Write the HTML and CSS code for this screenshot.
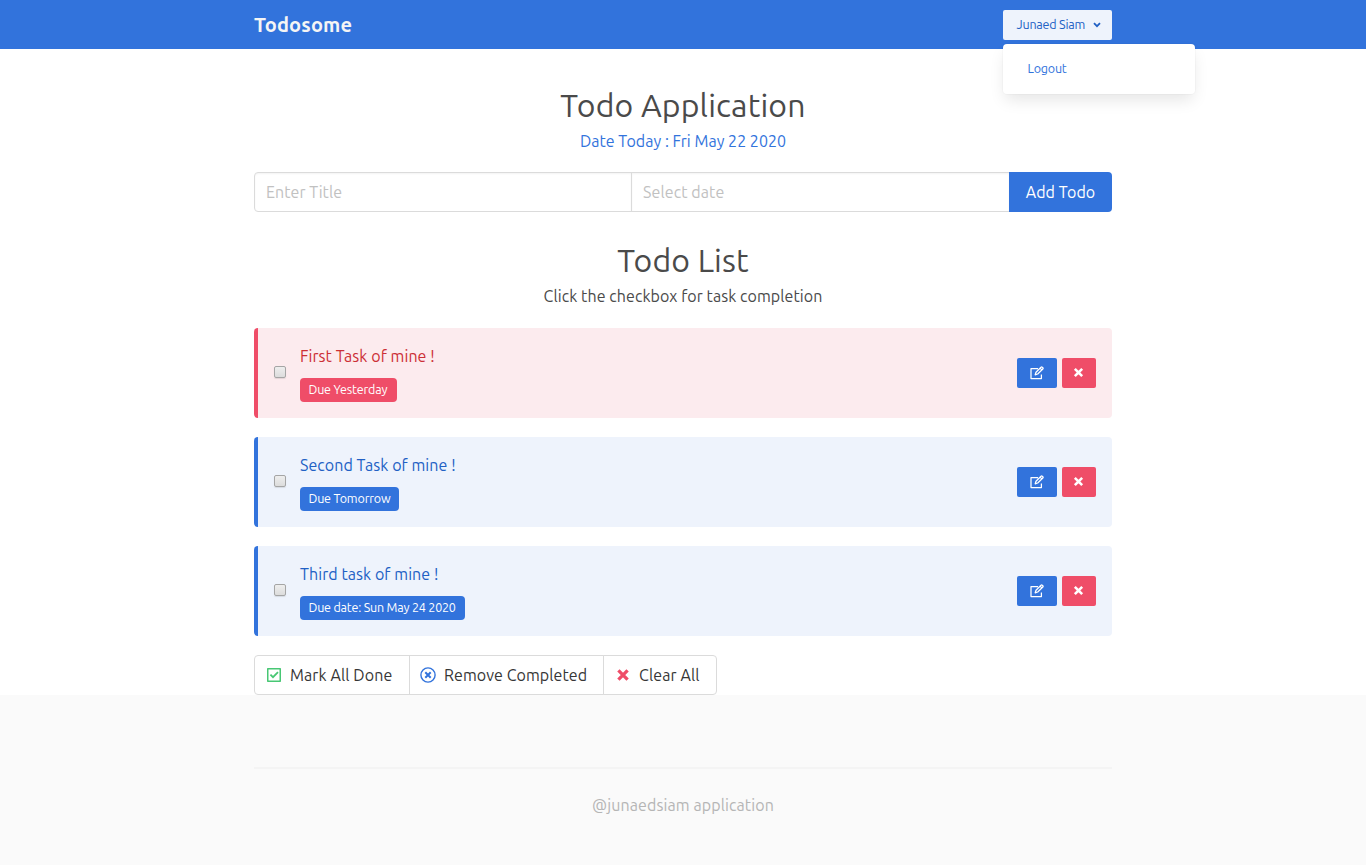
FILE: index.html
```html
<!DOCTYPE html>
<html lang="en">
<head>
<meta charset="utf-8">
<title>Todosome</title>
<link rel="stylesheet" href="styles.css">
</head>
<body>
<svg class="sprite" aria-hidden="true">
  <symbol id="edit" viewBox="0 0 14 14"><path d="M8 2.6H1v10h10.4V8.4M6 6.2 11 1.2Q11.6.6 12.2 1.2L12.8 1.8Q13.4 2.4 12.8 3L7.7 8 5.2 8.8Z M10.1 2.1 11.9 3.9" fill="none" stroke="currentColor" stroke-width="1.25" stroke-linejoin="round"/></symbol>
  <symbol id="cross" viewBox="0 0 12 12"><path d="M2 2 10 10M10 2 2 10" fill="none" stroke="currentColor" stroke-width="2.8"/></symbol>
</svg>
<nav class="navbar">
  <div class="container navbar-inner">
    <a class="brand"><span class="t-brand">Todosome</span></a>
    <div class="dropdown">
      <button class="user"><span class="t-user">Junaed Siam</span><svg class="chevron" viewBox="0 0 8 6"><path d="M1 1.2 4 4.2 7 1.2" fill="none" stroke="currentColor" stroke-width="1.8"/></svg></button>
      <div class="menu"><a class="t-logout">Logout</a></div>
    </div>
  </div>
</nav>
<main class="container">
  <header class="heading"><h1><span class="t-app">Todo Application</span></h1><p class="date"><span class="t-date">Date Today : Fri May 22 2020</span></p></header>
  <form class="form"><input class="input t-enter" placeholder="Enter Title"><input class="input t-select" placeholder="Select date"><button type="button" class="add"><span class="t-add">Add Todo</span></button></form>
  <header class="heading list-heading"><h2><span class="t-list">Todo List</span></h2><p><span class="t-click">Click the checkbox for task completion</span></p></header>
  <section class="tasks">
    <article class="task overdue">
      <input type="checkbox" class="check">
      <div class="info"><p><span class="t-task">First Task of mine !</span></p><span class="tag tag-first"><span class="t-due">Due Yesterday</span></span></div>
      <div class="actions"><button class="edit"><svg><use href="#edit"/></svg></button><button class="remove"><svg><use href="#cross"/></svg></button></div>
    </article>
    <article class="task">
      <input type="checkbox" class="check">
      <div class="info"><p><span class="t-task">Second Task of mine !</span></p><span class="tag tag-second"><span class="t-due">Due Tomorrow</span></span></div>
      <div class="actions"><button class="edit"><svg><use href="#edit"/></svg></button><button class="remove"><svg><use href="#cross"/></svg></button></div>
    </article>
    <article class="task">
      <input type="checkbox" class="check">
      <div class="info"><p><span class="t-task">Third task of mine !</span></p><span class="tag tag-third"><span class="t-sunday">Due date: Sun May 24 2020</span></span></div>
      <div class="actions"><button class="edit"><svg><use href="#edit"/></svg></button><button class="remove"><svg><use href="#cross"/></svg></button></div>
    </article>
  </section>
  <div class="bulk">
    <button class="bulk-done"><svg class="green" viewBox="0 0 16 16"><path d="M1.75 1.75h12.5v12.5H1.75Z" fill="none" stroke="currentColor" stroke-width="1.5" stroke-linejoin="round"/><path d="M4.4 7.6 7 10.2 12 5.2" fill="none" stroke="currentColor" stroke-width="1.8"/></svg><span class="t-mark">Mark All Done</span></button>
    <button class="bulk-remove"><svg class="blue" viewBox="0 0 16 16"><circle cx="8" cy="8" r="7.1" fill="none" stroke="currentColor" stroke-width="1.4"/><path d="M5.3 5.3 10.7 10.7M10.7 5.3 5.3 10.7" fill="none" stroke="currentColor" stroke-width="2"/></svg><span class="t-remove">Remove Completed</span></button>
    <button class="bulk-clear"><svg class="red" viewBox="0 0 16 16"><path d="M3.4 3.4 12.6 12.6M12.6 3.4 3.4 12.6" fill="none" stroke="currentColor" stroke-width="3.3"/></svg><span class="t-clear">Clear All</span></button>
  </div>
</main>
<footer class="footer"><div class="container"><hr><p><span class="t-foot">@junaedsiam application</span></p></div></footer>
</body>
</html>
```
FILE: styles.css
```css
* { box-sizing: border-box; margin: 0; padding: 0; }
html { background: #fafafa; overflow: hidden; }
body { background: #fff; color: #4a4a4a; font: 16px/24px Ubuntu, "Noto Sans", sans-serif; }
button, input { font: inherit; outline: 0; }
button { border: 0; display: flex; align-items: center; justify-content: center; white-space: nowrap; }
svg { display: block; flex: none; }
span, a { white-space: nowrap; }
.sprite { display: none; }
.container { width: 858px; margin: 0 auto; }
.navbar { background: #3273dc; height: 49px; }
.navbar-inner { display: flex; justify-content: space-between; padding-top: 10px; }
.brand { color: #f5f5f5; font-size: 20px; font-weight: 700; line-height: 30px; }
.dropdown { position: relative; font-size: 12.5px; }
.user { width: 109px; height: 30px; border-radius: 2px; background: #eef3fc; color: #2160c4; justify-content: flex-start; padding: 0 0 1px 13.5px; }
.user span { padding-bottom: 2px; }
.chevron { width: 8px; height: 6px; margin-left: auto; margin-right: 11px; }
.menu { position: absolute; top: 34px; left: 0; width: 192px; height: 50px; padding: 12px 24.5px; background: #fff; border-radius: 4px; box-shadow: 0 8px 16px -2px rgba(10,10,10,.1), 0 0 0 1px rgba(10,10,10,.02); color: #3273dc; }
.heading { text-align: center; padding-top: 38px; }
h1, h2 { font-size: 32px; font-weight: 400; line-height: 36px; margin-bottom: 6px; }
.date { color: #3273dc; }
.form { display: flex; margin-top: 19px; height: 40px; }
.input { width: 378px; border: 1px solid #dbdbdb; padding: 0 11px; background: #fff; box-shadow: inset 0 1px 2px rgba(10,10,10,.05); border-radius: 4px 0 0 4px; }
.input + .input { width: 379px; margin-left: -1px; border-radius: 0; }
.input::placeholder { color: #c1c1c1; opacity: 1; }
.add { width: 103px; margin-left: -1px; background: #3273dc; color: #fff; border-radius: 0 4px 4px 0; }
.list-heading { padding-top: 30px; }
.tasks { display: flex; flex-direction: column; gap: 19px; margin-top: 20px; }
.task { display: flex; align-items: center; height: 90px; padding: 16px; gap: 14px; border-left: 4px solid #3273dc; border-radius: 4px; background: #eef3fc; color: #2160c4; }
.overdue { border-color: #ef4d68; background: #fcebee; color: #cc2f35; }
.check { appearance: none; width: 12px; height: 12px; border: 1px solid #a5a5a5; border-radius: 2px; background: linear-gradient(#eee, #dcdcdc); box-shadow: 0 1px 1px rgba(0,0,0,.1); margin-top: -2px; }
.info { flex: 1; }
.tag { display: flex; align-items: center; width: 99px; height: 24px; margin-top: 10px; padding: 0 0 2px 8.5px; border-radius: 4px; background: #3273dc; color: #fff; font-size: 12.5px; }
.tag-first { width: 97px; background: #ef4d68; }
.tag-third { width: 165px; }
.actions { display: flex; gap: 5px; }
.actions button { height: 30px; border-radius: 2px; color: #fff; }
.actions .edit { width: 40px; background: #3273dc; }
.actions .remove { width: 34px; background: #ef4d68; }
.edit svg { width: 14px; height: 14px; }
.remove svg { width: 11px; height: 11px; margin: 0 1px 1px 0; }
.bulk { display: flex; margin-top: 19px; height: 40px; }
.bulk button { border: 1px solid #dbdbdb; background: #fff; color: #363636; justify-content: flex-start; padding-left: 11px; gap: 8px; }
.bulk svg { width: 16px; height: 16px; }
.bulk .bulk-done { width: 156px; border-radius: 4px 0 0 4px; }
.bulk .bulk-remove { width: 195px; margin-left: -1px; padding-left: 10px; }
.bulk .bulk-clear { width: 114px; margin-left: -1px; border-radius: 0 4px 4px 0; }
.green { color: #48c774; }
.blue { color: #3273dc; }
.red { color: #ef4d68; }
.footer { background: #fafafa; height: 170px; padding-top: 72px; text-align: center; color: #b5b5b5; }
hr { border: 0; height: 2px; background: #f4f4f4; margin-bottom: 24px; }
.t-brand { letter-spacing: .15px; }
.t-app { letter-spacing: .16px; }
.t-list { letter-spacing: .15px; }
.t-date { letter-spacing: .03px; }
.t-click, .t-enter, .t-add, .t-task, .t-remove { letter-spacing: .07px; }
.t-select, .t-mark, .t-clear, .t-foot { letter-spacing: .1px; }
.t-user, .t-logout, .t-sunday { letter-spacing: -.2px; }
.t-due { letter-spacing: -.17px; }
```
